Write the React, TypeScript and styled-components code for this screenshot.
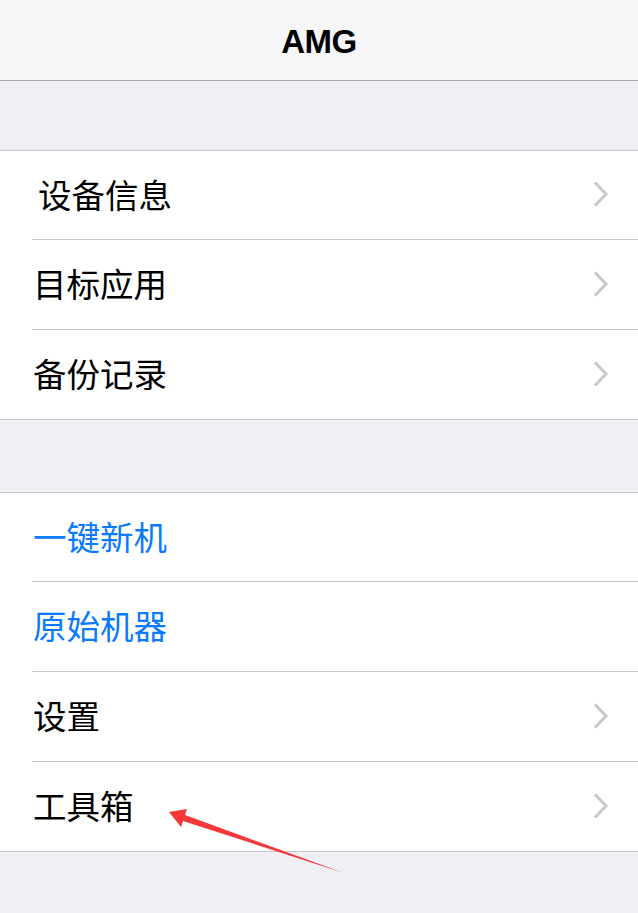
import { FC } from "react";
import styled, { createGlobalStyle } from "styled-components";

const GlobalStyle = createGlobalStyle`
  html, body {
    margin: 0;
    padding: 0;
    background: #efeff4;
  }
  body {
    font-family: "Noto Sans CJK SC", "Noto Sans", sans-serif;
  }
`;

const Page = styled.div`
  position: relative;
  width: 638px;
  min-height: 913px;
  background: #efeff4;
  overflow: hidden;
`;

const NavBar = styled.header`
  height: 80px;
  background: #f6f6f8;
  border-bottom: 1px solid #a9a9ac;
  display: flex;
  align-items: center;
  justify-content: center;
`;

const Title = styled.h1`
  margin: 0;
  font-family: "Liberation Sans", Arial, sans-serif;
  font-weight: 700;
  font-size: 33px;
  letter-spacing: -0.5px;
  color: #000;
  padding-top: 3px;
`;

const Spacer = styled.div<{ $h: number }>`
  height: ${(p) => p.$h}px;
`;

const Group = styled.section`
  background: #fff;
  border-top: 1px solid #c8c7cc;
  border-bottom: 1px solid #c8c7cc;
`;

const Row = styled.div`
  box-sizing: border-box;
  height: 88px;
  display: flex;
  align-items: center;
  margin-left: 32px;
  padding-right: 28px;
  & + & {
    height: 90px;
    border-top: 1px solid #c8c7cc;
  }
`;

const Label = styled.span<{ $blue?: boolean; $indent?: number }>`
  flex: 1;
  font-size: 33.5px;
  line-height: 1;
  padding-bottom: 3px;
  padding-left: ${(p) => p.$indent ?? 1}px;
  color: ${(p) => (p.$blue ? "#0a7aff" : "#000")};
`;

const Chevron: FC = () => (
  <svg width="18" height="28" viewBox="0 0 18 28" style={{ marginBottom: 2 }}>
    <path d="M3 2.5 L14 14 L3 25.5" fill="none" stroke="#c7c7cc" strokeWidth="3" />
  </svg>
);

const Arrow = styled.svg`
  position: absolute;
  left: 0;
  top: 0;
  pointer-events: none;
`;

type Item = { label: string; blue?: boolean; chevron?: boolean; indent?: number };

const first: Item[] = [
  { label: "设备信息", chevron: true, indent: 6 },
  { label: "目标应用", chevron: true },
  { label: "备份记录", chevron: true },
];

const second: Item[] = [
  { label: "一键新机", blue: true },
  { label: "原始机器", blue: true },
  { label: "设置", chevron: true },
  { label: "工具箱", chevron: true },
];

const List: FC<{ items: Item[] }> = ({ items }) => (
  <Group>
    {items.map((it) => (
      <Row key={it.label}>
        <Label $blue={it.blue} $indent={it.indent}>
          {it.label}
        </Label>
        {it.chevron && <Chevron />}
      </Row>
    ))}
  </Group>
);

export default function App() {
  return (
    <Page>
      <GlobalStyle />
      <NavBar>
        <Title>AMG</Title>
      </NavBar>
      <Spacer $h={69} />
      <List items={first} />
      <Spacer $h={72} />
      <List items={second} />
      <Arrow width="638" height="913" viewBox="0 0 638 913">
        <polygon
          points="169,812 187,809 185,815 344,873 183,821 181,827"
          fill="#f5383a"
        />
      </Arrow>
    </Page>
  );
}
